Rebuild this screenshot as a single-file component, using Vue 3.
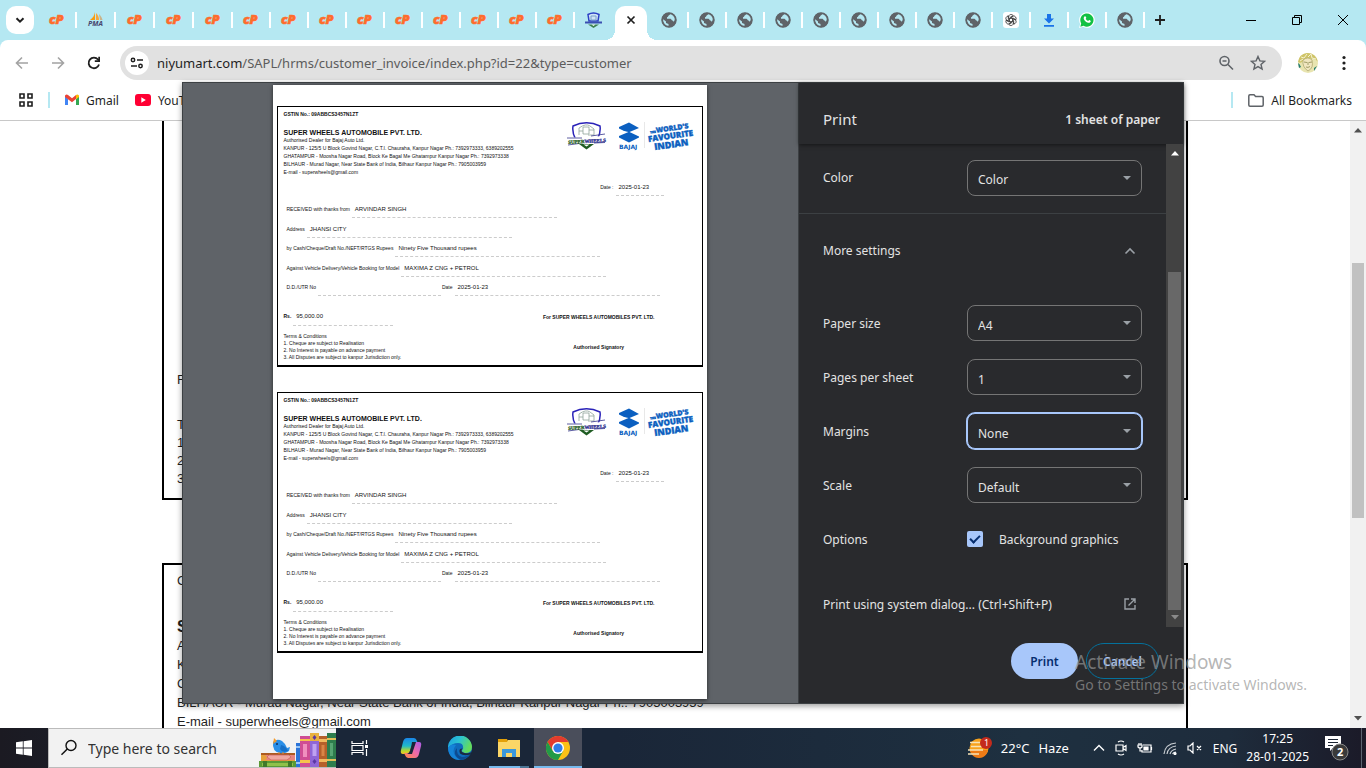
<template>
  <div class="screen">
    <header class="tab-strip">
      <button class="tab-search" aria-label="Search tabs">
        <svg width="12" height="12" viewBox="0 0 12 12"><path d="M2.5 4.2 6 7.6l3.5-3.4" fill="none" stroke="#1f1f1f" stroke-width="2" /></svg>
      </button>
      <div class="tabs">
        <div
          v-for="(tab, i) in tabs"
          :key="i"
          class="tab"
          :class="{ active: tab === 'active', plain: tabs[i + 1] === 'active' }"
        >
          <svg v-if="tab === 'cp'" width="18" height="20" viewBox="0 0 18 20">
            <text x="1" y="14" class="cp-mark">cP</text>
          </svg>
          <svg v-else-if="tab === 'pma'" width="18" height="20" viewBox="-1 -1 18 20">
            <path d="M7 1v8H2c3-2 4.500-5 5-8z" fill="#f89c0e" />
            <path d="M8 2c2 2 3 4 3 7H8z" fill="#f9a63a" />
            <path d="M11 3c2 2 3 4 3.500 6H12z" fill="#c9b38a" />
            <text x="0" y="15" class="pma-mark">PMA</text>
          </svg>
          <svg v-else-if="tab === 'wheels'" width="17" height="17" viewBox="0 0 17 17">
            <path d="M3 2.500Q8.500-.5 14 2.500L13 9H4z" fill="#cfe3f7" stroke="#2b3fc4" stroke-width="1.500" />
            <path d="M6 4h5v4H6z" fill="none" stroke="#7aa0c8" />
            <path d="M0 10.500h17" stroke="#3b4fb0" stroke-width="2" />
            <path d="M3 12.500h11L8.500 16z" fill="#3e8050" />
            <path d="M6.500 12.500h4l-2 1.500z" fill="#fff" />
          </svg>
          <button v-else-if="tab === 'active'" class="tab-close" aria-label="Close tab">
            <svg width="10" height="10" viewBox="0 0 10 10"><path d="m1.500 1.500 7 7m0-7-7 7" stroke="#1f1f1f" stroke-width="1.700" /></svg>
          </button>
          <svg v-else-if="tab === 'globe'" width="16" height="16" viewBox="0 0 16 16">
            <circle cx="8" cy="8" r="7.300" fill="#5f6368" />
            <path d="M1.800 7 5 9.500V11l2.500 1v2.500C4.500 14.500 1.500 11.500 1.800 7zM9 1.800c.2 1.200-1 1.300-1.500 2s-.5 1.500-1.500 1.500v1.400h3.500c1.200.3.8 1.600 2 1.800l1.300 1.200c1.500-2 1.800-4.500.2-6.200C12 2.300 10.500 1.700 9 1.800z" fill="#b5e8f2" />
            <circle cx="8" cy="8" r="6.800" fill="none" stroke="#5f6368" stroke-width="1.800" />
          </svg>
          <svg v-else-if="tab === 'gpt'" width="16" height="16" viewBox="0 0 16 16">
            <rect width="16" height="16" rx="3" fill="#fff" />
            <g fill="none" stroke="#333" stroke-width=".8">
              <path v-for="a in 6" :key="a" :transform="`rotate(${a * 60} 8 8)`" d="M8 6 10 7.200V10M5.800 6V3.800C6.500 2.200 9 2 10.200 3.600L7 5.500" />
            </g>
          </svg>
          <svg v-else-if="tab === 'download'" width="12" height="13" viewBox="0 0 12 13">
            <path d="M4 0h4v4.500h3L6 9.500 1 4.500h3zM1 11h10v1.800H1z" fill="#1a73e8" />
          </svg>
          <svg v-else width="16" height="16" viewBox="0 0 16 16">
            <path d="m0 16 1.200-4A7.800 7.800 0 1 1 4 14.800z" fill="#fff" />
            <path d="m1.300 14.700.9-3.300a6.600 6.600 0 1 1 2.400 2.400z" fill="#12c143" />
            <path d="M5.500 4.500c1-.8 1.400.2 1.800 1.300-.1.600-.6.700-.5 1.100.6 1 1.300 1.600 2.300 2 .5 0 .6-.8 1.100-.8 1.100.4 1.800.8 1.500 1.400-.5 1.500-2 1.600-3.300 1C6.500 9.700 5.500 8.500 4.900 7.200c-.3-1-.2-2 .6-2.700z" fill="#fff" />
          </svg>
        </div>
      </div>
      <button class="new-tab" aria-label="New tab">
        <svg width="12" height="12" viewBox="0 0 12 12"><path d="M6 1v10M1 6h10" stroke="#1f1f1f" stroke-width="1.800" /></svg>
      </button>
      <div class="window-controls">
        <button aria-label="Minimize">
          <svg width="10" height="10" viewBox="0 0 10 10"><path d="M0 5.500h10" stroke="#000" /></svg>
        </button>
        <button aria-label="Restore">
          <svg width="10" height="10" viewBox="0 0 10 10"><path d="M.5 2.500h7v7h-7zM2.500 2.500v-2h7v7h-2" fill="none" stroke="#000" /></svg>
        </button>
        <button aria-label="Close">
          <svg width="10" height="10" viewBox="0 0 10 10"><path d="m0 0 10 10M10 0 0 10" stroke="#000" /></svg>
        </button>
      </div>
    </header>

    <div class="toolbar-wrap">
      <nav class="toolbar">
        <button class="nav-btn" aria-label="Back">
          <svg width="14" height="14" viewBox="0 0 14 14"><path d="M13 7H2M7 1.500 1.500 7 7 12.500" fill="none" stroke="#a3a3a3" stroke-width="1.600" /></svg>
        </button>
        <button class="nav-btn" aria-label="Forward">
          <svg width="14" height="14" viewBox="0 0 14 14"><path d="M1 7h11M7 1.500 12.500 7 7 12.500" fill="none" stroke="#a3a3a3" stroke-width="1.600" /></svg>
        </button>
        <button class="nav-btn" aria-label="Reload">
          <svg width="14" height="14" viewBox="0 0 14 14">
            <path d="M12 8.500A5.300 5.300 0 1 1 11 3.500l1 1" fill="none" stroke="#1f1f1f" stroke-width="1.800" />
            <path d="M13 .8V6H7.800V4.300h3.500V.8z" fill="#1f1f1f" />
          </svg>
        </button>
        <div class="omnibox">
          <button class="site-info" aria-label="Site information">
            <svg width="14" height="12" viewBox="0 0 14 12"><path d="M7 3h6M1 9h6" stroke="#1f1f1f" stroke-width="1.600" /><circle cx="3" cy="3" r="1.700" fill="none" stroke="#1f1f1f" stroke-width="1.500" /><circle cx="10.500" cy="9" r="1.700" fill="none" stroke="#1f1f1f" stroke-width="1.500" /></svg>
          </button>
          <p class="url"><b>niyumart.com</b>/SAPL/hrms/customer_invoice/index.php?id=22&amp;type=customer</p>
          <button class="omni-btn" aria-label="Zoom">
            <svg width="16" height="16" viewBox="0 0 16 16"><circle cx="6.500" cy="6" r="4.500" fill="none" stroke="#5f6368" stroke-width="1.600" /><path d="M4.500 6h4M10 9.500l5 5" stroke="#5f6368" stroke-width="1.600" /></svg>
          </button>
          <button class="omni-btn" aria-label="Bookmark this tab">
            <svg width="16" height="16" viewBox="0 0 16 16"><path d="m8 1.500 1.900 4.400 4.700.4-3.600 3.100 1.100 4.700L8 11.600l-4.100 2.500L5 9.400 1.400 6.300l4.700-.4z" fill="none" stroke="#5f6368" stroke-width="1.400" /></svg>
          </button>
        </div>
        <button class="avatar" aria-label="Profile">
          <svg width="20" height="20" viewBox="0 0 20 20">
            <circle cx="10" cy="10" r="10" fill="#e8e4b0" />
            <path d="M0 9Q1 1 9 0q9 0 11 9-3-4-6-3-6-3-9 2-2 3-5 1z" fill="#cfc468" />
            <path d="m3 4 3 1 3-4M10 4l3-3 1 4 4 1M2 8l3-2" fill="none" stroke="#f4f1d2" />
            <path d="M5 7q5-4 9 0 2 8-4 11-6-4-5-11z" fill="#f0e6c0" stroke="#b0a970" stroke-width=".8" />
            <path d="m6 9 3 .500M11 9.500l3-.5M8 14q2 1 4-.5M10 9v3" stroke="#8b8a50" stroke-width=".8" fill="none" />
            <path d="M0 10q2 1 3 4l-2 1zM16 15l3-2-3 5z" fill="#257d71" />
          </svg>
        </button>
        <button class="menu-btn" aria-label="Menu">
          <svg width="4" height="16" viewBox="0 0 4 16" fill="#1f1f1f"><circle cx="2" cy="2.500" r="1.600" /><circle cx="2" cy="8" r="1.600" /><circle cx="2" cy="13.500" r="1.600" /></svg>
        </button>
      </nav>
    </div>

    <nav class="bookmarks">
      <button class="apps-btn" aria-label="Apps">
        <svg width="14" height="14" viewBox="0 0 14 14" fill="none" stroke="#1f1f1f" stroke-width="1.600"><path d="M1 1h4v4H1zM9 1h4v4H9zM1 9h4v4H1zM9 9h4v4H9z" /></svg>
      </button>
      <i class="bar-sep"></i>
      <a class="bookmark" href="#">
        <svg width="14" height="12" viewBox="0 0 14 12">
          <path d="M0 2v9h3V5z" fill="#4285f4" /><path d="M14 2v9h-3V5z" fill="#34a853" />
          <path d="M0 1.500Q1.500 0 3 1l4 3.200L11 1v4L7 8.200 0 3z" fill="#ea4335" /><path d="M11 1q1.500-1 3 .5V3l-3 2.300z" fill="#fbbc04" />
        </svg>
        Gmail
      </a>
      <a class="bookmark" href="#">
        <svg width="16" height="12" viewBox="0 0 16 12"><rect width="16" height="12" rx="3" fill="#f03" /><path d="m6.300 3.300 4.500 2.700-4.500 2.700z" fill="#fff" /></svg>
        YouTube
      </a>
      <i class="bar-sep right"></i>
      <a class="bookmark all" href="#">
        <svg width="16" height="13" viewBox="0 0 16 13"><path d="M.8 2q0-1.200 1.200-1.200h4l1.600 1.700h6.400q1.200 0 1.200 1.200V11q0 1.200-1.200 1.200H2Q.8 12.200.8 11z" fill="none" stroke="#5f6368" stroke-width="1.500" /></svg>
        All Bookmarks
      </a>
    </nav>

    <main class="viewport">
      <div class="web-page">
        <section class="invoice first">
          <p class="payee">For SUPER WHEELS AUTOMOBILES PVT. LTD.</p>
          <p>Terms &amp; Conditions</p>
          <p v-for="term in terms" :key="term">{{ term }}</p>
        </section>
        <section class="invoice second">
          <p class="gstin">GSTIN No.: 09ABBCS3457N1ZT</p>
          <h2>SUPER WHEELS AUTOMOBILE PVT. LTD.</h2>
          <p v-for="line in addressLines" :key="line" class="address">{{ line }}</p>
        </section>
      </div>
      <div class="page-scrollbar">
        <svg width="8" height="5" viewBox="0 0 8 5"><path d="M4 0 8 4.500H0z" fill="#505050" /></svg>
        <i class="page-thumb"></i>
        <svg class="arrow-down" width="8" height="5" viewBox="0 0 8 5"><path d="M0 0h8L4 4.500z" fill="#505050" /></svg>
      </div>
    </main>

    <div class="print-dialog" role="dialog" aria-label="Print">
      <div class="preview">
        <div class="sheet">
          <article v-for="n in 2" :key="n" class="receipt">
            <div class="receipt-head">
              <div>
                <p class="bold gst">GSTIN No.: 09ABBCS3457N1ZT</p>
                <h3>SUPER WHEELS AUTOMOBILE PVT. LTD.</h3>
                <p v-for="(line, i) in addressLines" :key="line" class="small" :class="{ tight: i === 0 }">{{ line }}</p>
              </div>
              <svg class="logos" width="128" height="34" viewBox="0 0 128 34">
                <path d="M6 5Q19.500-1.500 33 5q1 6-2.500 13h-22Q5 12 6 5z" fill="#fff" stroke="#2a22b8" stroke-width="1.500" />
                <path d="M12 14V7q7-5 11-2l4 3v6h-6m-5-8v7h6V6zM12 10h4m6-1h5" fill="none" stroke="#8fa39b" stroke-width=".8" />
                <path d="M12 23h15l-7.500 5.500z" fill="#1f5c22" /><path d="M16.500 23.500h6l-3 2z" fill="#fff" />
                <path d="M0 16.700 39 15v5.600L0 22.300z" fill="#fff" />
                <path d="M0 17 15 17M24 15l14-2M1 24l11-1.500M27 22l11-.5" stroke="#35358c" stroke-width=".8" />
                <text x="1" y="22" transform="rotate(-3 19 19)"><tspan class="wheel-mark green">SUPER</tspan><tspan class="wheel-mark">WHEELS</tspan></text>
                <path d="M52 6 62 1.500 72 7v2.500l-7 1.500 7 4v1.500l-10 5-10-5V14l7-3-7-3.500z" fill="#0b5fc0" />
                <path d="m52 9 9.500 2L52 15zM72 7l-9.500 4 9.500 4.500z" fill="#fff" />
                <text x="52" y="28" class="bajaj-mark">BAJAJ</text>
                <path d="M77.500 1v26" stroke="#e8e8e8" />
                <g transform="rotate(-8 102 16)" class="fav-mark">
                  <text x="84" y="10" class="tiny">THE</text>
                  <text x="90" y="10">WORLD'S</text>
                  <text x="81" y="18" class="mid">FAVOURITE</text>
                  <text x="86" y="27" class="big">INDIAN</text>
                </g>
              </svg>
            </div>
            <div class="field issue-date">
              <span class="small">Date :</span>
              <span class="blank short">2025-01-23</span>
            </div>
            <div class="fields">
              <div v-for="row in rows" :key="row[0].label" class="field">
                <template v-for="cell in row" :key="cell.label">
                  <span class="small">{{ cell.label }}</span>
                  <span class="blank" :class="cell.size">{{ cell.value }}</span>
                </template>
              </div>
            </div>
            <div class="receipt-foot">
              <div>
                <div class="field amount">
                  <span class="bold">Rs.</span>
                  <span class="blank sum">95,000.00</span>
                </div>
                <p class="small">Terms &amp; Conditions</p>
                <p v-for="term in terms" :key="term" class="small">{{ term }}</p>
              </div>
              <div class="sign">
                <p class="bold">For SUPER WHEELS AUTOMOBILES PVT. LTD.</p>
                <p class="bold">Authorised Signatory</p>
              </div>
            </div>
          </article>
        </div>
      </div>

      <aside class="sidebar">
        <div class="side-head">
          <h1>Print</h1>
          <span>1 sheet of paper</span>
        </div>
        <div class="side-body">
          <form class="settings" @submit.prevent>
            <div class="setting color-row">
              <label for="set-color">Color</label>
              <div class="select"><select id="set-color"><option>Color</option></select></div>
            </div>
            <button class="more" type="button">
              More settings
              <svg width="12" height="8" viewBox="0 0 12 8"><path d="m1.500 6.500 4.500-4.500 4.500 4.500" fill="none" stroke="#9aa0a6" stroke-width="1.600" /></svg>
            </button>
            <div v-for="s in settings" :key="s.id" class="setting">
              <label :for="s.id">{{ s.label }}</label>
              <div class="select" :class="{ focused: s.focused }">
                <select :id="s.id"><option>{{ s.value }}</option></select>
              </div>
            </div>
            <div class="setting">
              <span>Options</span>
              <label class="check"><input v-model="backgroundGraphics" type="checkbox" />Background graphics</label>
            </div>
            <button class="system" type="button">
              Print using system dialog... (Ctrl+Shift+P)
              <svg width="12" height="12" viewBox="0 0 12 12"><path d="M5 1H1v10h10V7M7 1h4v4M11 1 4.500 7.500" fill="none" stroke="#9aa0a6" stroke-width="1.400" /></svg>
            </button>
          </form>
          <div class="side-scrollbar">
            <svg width="8" height="5" viewBox="0 0 8 5"><path d="M4 0 8 4.500H0z" fill="#fff" /></svg>
            <i class="side-thumb"></i>
            <svg class="arrow-down" width="8" height="5" viewBox="0 0 8 5"><path d="M0 0h8L4 4.500z" fill="#8a8a8a" /></svg>
          </div>
        </div>
        <div class="actions">
          <button class="primary">Print</button>
          <button class="cancel">Cancel</button>
        </div>
      </aside>
    </div>

    <div class="watermark">
      <p class="wm-title">Activate Windows</p>
      <p>Go to Settings to activate Windows.</p>
    </div>

    <footer class="taskbar">
      <button class="start" aria-label="Start">
        <svg width="16" height="16" viewBox="0 0 16 16" fill="#fff"><path d="M0 2.300 6.800 1.300v6.300H0zM7.600 1.200 16 0v7.600H7.600zM0 8.400h6.800v6.300L0 13.700zM7.600 8.400H16V16l-8.400-1.200z" /></svg>
      </button>
      <label class="search">
        <svg width="18" height="18" viewBox="0 0 18 18"><circle cx="11" cy="6.500" r="5" fill="none" stroke="#111" stroke-width="1.400" /><path d="M7.300 10 1.500 15.800" stroke="#111" stroke-width="1.500" /></svg>
        <input type="text" placeholder="Type here to search" aria-label="Search" />
        <svg class="books" width="77" height="34" viewBox="0 0 77 34">
          <path d="M2 21h34v7H2z" fill="#e7a13a" /><path d="M6 22h30v5H6q4-2 0-5z" fill="#e8837f" /><path d="M2 20h34v2H2z" fill="#ad5b20" />
          <path d="M10 22h20l2 2-4 3H12l-4-3z" fill="#f0a7a0" stroke="#c95f5c" stroke-width=".7" />
          <path d="M0 28h37v6H0z" fill="#5a9a35" /><path d="M3 30h31v3H3z" fill="#8fc14a" /><path d="M4 28h4v6H4zM29 28h4v6h-4z" fill="#3f7a2a" />
          <path d="M14 9q4-4 9-1 4 3 5 7l3-1-1 4q-4 3-9 2-8-1-7-11z" fill="#2a8fe8" />
          <path d="M22 12q5 1 7 6-6 2-8-2z" fill="#1670c8" /><path d="m15 5 3 3-4 3z" fill="#f29a2c" /><circle cx="18" cy="11" r="1" fill="#0c2e60" /><path d="M20 19v2m4-2v2" stroke="#e88b2e" />
          <path d="M37 10h4v24h-4z" fill="#2c74d8" /><path d="M37 13h4v2h-4zM37 29h4v2h-4z" fill="#9ac6f5" />
          <path d="M41 3h10v31H41z" fill="#cf4d94" /><path d="M41 6h10v2H41zM41 27h10v3H41z" fill="#f6c24c" /><path d="M44 11h4v13h-4z" fill="#f08fbe" />
          <path d="M51 0h9v34h-9z" fill="#8f66d6" /><path d="M51 0h9v8h-9z" fill="#e8b13e" /><path d="m55.500 2 2 2.500-2 2.500-2-2.500zM55.500 26l2 2.500-2 2.500-2-2.500z" fill="#5a37a2" /><path d="M53.500 11h4v12h-4z" fill="#bfa2f0" />
          <path d="M60 3h8v31h-8z" fill="#b5602a" /><path d="M60 6h8v3h-8zM60 26h8v3h-8z" fill="#f0b95e" /><path d="M62.500 12h3v11h-3z" fill="#d98546" />
          <path d="M68 0h9v34h-9z" fill="#2e7d4d" /><path d="M68 5h9v2h-9zM68 26h9v2h-9z" fill="#e2bf57" /><path d="M71 10h3v13h-3z" fill="#57a573" />
        </svg>
      </label>
      <button class="app task-view" aria-label="Task view">
        <svg width="18" height="16" viewBox="0 0 18 16" fill="none" stroke="#fff" stroke-width="1.200"><path d="M1 1v2.500h11V1M1 15v-2.500h11V15M1 5.500h11v5H1zM15.500 0v4M15.500 9v7" /><path d="M14 5h3v3h-3z" fill="#fff" stroke="none" /></svg>
      </button>
      <button class="app" aria-label="Copilot">
        <svg width="24" height="22" viewBox="0 0 24 22">
          <path d="M8 1h7q2 0 3 3l1 3h-4q-2 0-3 3l-1 4q-1 3-3 3H4q-3 0-2-4L4 5q1-4 4-4z" fill="url(#cop-a)" />
          <path d="M16 21H9q-2 0-3-3l-1-2h4q2 0 3-3l1-5q1-3 3-3h4q3 0 2 4l-2 8q-1 4-4 4z" fill="url(#cop-b)" />
          <path d="M13 5h4l-4 12H8q3-1 4-6z" fill="#1a2638" />
          <defs>
            <linearGradient id="cop-a" x1="0" y1="0" x2="0" y2="1"><stop stop-color="#1a86e8" /><stop offset=".5" stop-color="#20b9c9" /><stop offset=".8" stop-color="#b8d92c" /><stop offset="1" stop-color="#f6c425" /></linearGradient>
            <linearGradient id="cop-b" x1="1" y1="0" x2="0" y2="1"><stop stop-color="#a75ce8" /><stop offset=".5" stop-color="#f06aa8" /><stop offset="1" stop-color="#ff8b3e" /></linearGradient>
          </defs>
        </svg>
      </button>
      <button class="app" aria-label="Edge">
        <svg width="24" height="24" viewBox="0 0 24 24">
          <defs>
            <linearGradient id="edge-a" x1="0" y1="0" x2="1" y2=".4"><stop stop-color="#1b9de2" /><stop offset=".5" stop-color="#2bc3d2" /><stop offset="1" stop-color="#64dc5c" /></linearGradient>
          </defs>
          <circle cx="12" cy="12" r="12" fill="#0f6cbd" />
          <path d="M0 12A12 12 0 0 1 24 11q0 6-7 6-5-1-2-4 1-6-5-6-6 0-10 5z" fill="url(#edge-a)" />
          <path d="M8 9q-5 6 0 12l4 3Q1 24 0 12q3-5 8-3z" fill="#1583d8" />
          <path d="M9 12q-1 7 5 9 5 0 8-3-3 5-9 6-7-3-6-9z" fill="#0d4b91" />
          <path d="M14.500 12.500q-3 3 2 4.500 4 1 7-1l-1 2.500q-7 2-10.500-1-2-5 2.500-5z" fill="#1a2a40" />
        </svg>
      </button>
      <button class="app running split" aria-label="File Explorer">
        <svg width="22" height="18" viewBox="0 0 22 18"><path d="M0 0h9l1 2v4H0z" fill="#e3a008" /><path d="M0 3h9l1-2h12v17H0z" fill="#fbd667" /><path d="M4 18v-8h14v8h-4v-4H8v4z" fill="#3a98dc" /></svg>
      </button>
      <button class="app running current" aria-label="Chrome">
        <svg width="24" height="24" viewBox="0 0 24 24">
          <circle cx="12" cy="12" r="12" fill="#fbc116" />
          <path d="M1.600 6A12 12 0 0 1 22.400 6H12L6.800 15z" fill="#e33b2e" />
          <path d="M1.600 6A12 12 0 0 0 12 24l5.200-9H6.800z" fill="#229a48" />
          <circle cx="12" cy="12" r="6" fill="#fff" /><circle cx="12" cy="12" r="4.600" fill="#2f7de9" />
        </svg>
      </button>
      <div class="tray">
        <button class="weather">
          <svg width="24" height="22" viewBox="0 0 24 22">
            <circle cx="11" cy="11" r="9.500" fill="#f8a21c" /><path d="M2 13h18q-2 8-9 8t-9-8z" fill="#ee7b16" />
            <path d="M2 5.500h10M3 9.500h15M0 13h15M0 17h11" stroke="#f7e3b5" stroke-width="1.600" />
            <circle cx="18" cy="6" r="6" fill="#c42b1c" /><text x="16" y="9" class="badge-num">1</text>
          </svg>
          <span>22°C</span><span>Haze</span>
        </button>
        <svg class="tray-icon" width="12" height="8" viewBox="0 0 12 8"><path d="m1 6.500 5-5 5 5" fill="none" stroke="#fff" stroke-width="1.400" /></svg>
        <svg class="tray-icon" width="12" height="16" viewBox="0 0 12 16" fill="none" stroke="#fff" stroke-width="1.200"><path d="M3 2q3-2 6 0M3 14q3 2 6 0M1 5h7v6H1zM8 7.500l3-2v5l-3-2" /></svg>
        <svg class="tray-icon" width="16" height="12" viewBox="0 0 16 12" fill="none" stroke="#fff" stroke-width="1.200"><path d="M6 3h8v7H5V8M14.500 5v3M1 3h4v2q-2 2-4 0zM2 1v2M4 1v2M3 6v3h2" /><path d="M7 5h4v3H7z" fill="#fff" /></svg>
        <svg class="tray-icon" width="14" height="14" viewBox="0 0 14 14" fill="none" stroke="#c9ced3" stroke-width="1.200"><path d="M1 13Q2 3 13 2M4 13q1-7 9-8M7 13q1-4 6-5M9.500 13q1-2 3.500-2" /><circle cx="12" cy="12.500" r="1" fill="#fff" stroke="#fff" /></svg>
        <svg class="tray-icon" width="16" height="12" viewBox="0 0 16 12" fill="none" stroke="#fff" stroke-width="1.200"><path d="M1 4h2l3-3v10L3 8H1zM10 4l4 4m0-4-4 4" /></svg>
        <span class="lang">ENG</span>
        <div class="clock"><span>17:25</span><span>28-01-2025</span></div>
        <button class="notes" aria-label="Notifications">
          <svg width="24" height="26" viewBox="0 0 24 26">
            <path d="M0 1h16v12H8l-3 3v-3H0z" fill="#fff" /><path d="M3 4.500h10M3 7.500h10M3 10.500h5" stroke="#1b2433" />
            <circle cx="15" cy="17" r="8" fill="#3a3a3a" stroke="#888" /><text x="12" y="21" class="note-num">2</text>
          </svg>
        </button>
      </div>
    </footer>
  </div>
</template>

<script setup>
import { ref } from 'vue'

const tabs = [
  'cp',
  'pma',
  ...Array(12).fill('cp'),
  'wheels',
  'active',
  ...Array(9).fill('globe'),
  'gpt',
  'download',
  'whatsapp',
  'globe',
]

const addressLines = [
  'Authorised Dealer for Bajaj Auto Ltd.',
  'KANPUR - 125/5 U Block Govind Nagar, C.T.I. Chauraha, Kanpur Nagar Ph.: 7392973333, 6389202555',
  'GHATAMPUR - Moosha Nagar Road, Block Ke Bagal Me Ghatampur Kanpur Nagar Ph.: 7392973338',
  'BILHAUR - Murad Nagar, Near State Bank of India, Bilhaur Kanpur Nagar Ph.: 7905003959',
  'E-mail - superwheels@gmail.com',
]

const terms = [
  '1. Cheque are subject to Realisation',
  '2. No Interest is payable on advance payment',
  '3. All Disputes are subject to kanpur Jurisdiction only.',
]

const rows = [
  [{ label: 'RECEIVED with thanks from', value: 'ARVINDAR SINGH' }],
  [{ label: 'Address', value: 'JHANSI CITY' }],
  [{ label: 'by Cash/Cheque/Draft No./NEFT/RTGS Rupees', value: 'Ninety Five Thousand rupees' }],
  [{ label: 'Against Vehicle Delivery/Vehicle Booking for Model', value: 'MAXIMA Z CNG + PETROL' }],
  [
    { label: 'D.D./UTR No', value: '', size: 'medium' },
    { label: 'Date', value: '2025-01-23' },
  ],
]

const settings = [
  { id: 'set-paper', label: 'Paper size', value: 'A4' },
  { id: 'set-pages', label: 'Pages per sheet', value: '1' },
  { id: 'set-margins', label: 'Margins', value: 'None', focused: true },
  { id: 'set-scale', label: 'Scale', value: 'Default' },
]

const backgroundGraphics = ref(true)
</script>

<style>
body {
  margin: 0;
  overflow: hidden;
}
</style>

<style scoped>
.screen {
  position: relative;
  display: flex;
  flex-direction: column;
  height: 100vh;
  overflow: hidden;
  background: #fff;
  color: #1f1f1f;
  font-family: "Noto Sans", "Open Sans", sans-serif;
  font-size: 12px;
}

.screen *,
.screen *::before,
.screen *::after {
  box-sizing: border-box;
}

p,
h1,
h2,
h3 {
  margin: 0;
}

button {
  display: flex;
  align-items: center;
  justify-content: center;
  padding: 0;
  border: none;
  background: none;
  font: inherit;
  color: inherit;
}

a {
  color: inherit;
  text-decoration: none;
}

svg {
  flex: none;
  display: block;
}

/* tab strip */
.tab-strip {
  display: flex;
  align-items: center;
  height: 40px;
  flex: none;
  padding-left: 6px;
  background: #b5e8f2;
}

.tab-search {
  width: 28px;
  height: 28px;
  margin-right: 3px;
  border-radius: 10px;
  background: #fff;
}

.tabs {
  display: flex;
  height: 40px;
}

.tab {
  position: relative;
  display: flex;
  align-items: center;
  justify-content: center;
  width: 38px;
}

.tab:nth-child(-n + 5) {
  width: 39px;
}

.tab::after {
  content: "";
  position: absolute;
  right: -1px;
  top: 12px;
  width: 2px;
  height: 16px;
  background: #fff;
}

.tab.plain::after {
  display: none;
}

.tab.active {
  width: 32px;
  margin: 6px 3px 0;
  padding-bottom: 6px;
  border-radius: 10px 10px 0 0;
  background: #fff;
}

.tab.active::before,
.tab.active::after {
  content: "";
  position: absolute;
  top: auto;
  bottom: 0;
  width: 10px;
  height: 10px;
  background: radial-gradient(circle at 0 0, transparent 10px, #fff 10px);
}

.tab.active::before {
  left: -10px;
}

.tab.active::after {
  right: -10px;
  background: radial-gradient(circle at 100% 0, transparent 10px, #fff 10px);
}

.cp-mark {
  font: italic 800 13px "Open Sans", sans-serif;
  fill: #ff6c2c;
  stroke: #ff6c2c;
  stroke-width: 0.6px;
}

.pma-mark {
  font: italic 700 7px "Open Sans", sans-serif;
  fill: #46466e;
}

.new-tab {
  width: 28px;
  margin-left: 2px;
}

.window-controls {
  display: flex;
  margin-left: auto;
}

.window-controls button {
  width: 46px;
  height: 40px;
}

/* toolbar */
.toolbar-wrap {
  flex: none;
  background: #b5e8f2;
}

.toolbar {
  display: flex;
  align-items: center;
  height: 46px;
  padding: 0 8px 0 4px;
  border-radius: 8px 8px 0 0;
  background: #fff;
}

.nav-btn {
  width: 36px;
  height: 28px;
}

.omnibox {
  flex: 1;
  display: flex;
  align-items: center;
  height: 34px;
  margin: 0 12px 0 8px;
  padding: 0 8px 0 5px;
  border-radius: 17px;
  background: #e1e1e1;
}

.site-info {
  width: 24px;
  height: 24px;
  border-radius: 12px;
  background: #fff;
}

.url {
  flex: 1;
  padding-left: 8px;
  font-size: 13px;
  color: #5c5c5c;
}

.url b {
  font-weight: 400;
  color: #1f1f1f;
}

.omni-btn {
  width: 32px;
  height: 28px;
}

.avatar {
  width: 28px;
  height: 28px;
}

.menu-btn {
  width: 28px;
  height: 28px;
  margin-left: 8px;
}

/* bookmarks bar */
.bookmarks {
  display: flex;
  align-items: center;
  height: 35px;
  flex: none;
  padding: 0 14px 6px 12px;
  border-bottom: 1px solid #c8c8c8;
}

.apps-btn {
  width: 28px;
  height: 28px;
}

.bar-sep {
  width: 2px;
  height: 16px;
  margin: 0 15px 0 8px;
  background: #b5e8f2;
}

.bar-sep.right {
  margin-left: auto;
}

.bookmark {
  display: flex;
  align-items: center;
  gap: 7px;
  margin-right: 16px;
}

.bookmark.all {
  margin-right: 0;
}

/* page behind the dialog */
.viewport {
  flex: 1;
  display: flex;
  min-height: 0;
  overflow: hidden;
}

.web-page {
  flex: 1;
  display: flex;
  flex-direction: column;
  align-items: center;
  gap: 63px;
  overflow: hidden;
  font: 13px/18px "Liberation Sans", Arial, sans-serif;
}

.invoice {
  flex: none;
  width: 76%;
  padding: 0 13px;
  border: 2px solid #000;
}

.invoice.first {
  display: flex;
  flex-direction: column;
  justify-content: flex-end;
  height: 379px;
  padding-bottom: 10px;
  border-top: none;
}

.payee {
  margin-bottom: 27px;
}

.invoice.second {
  padding-top: 7px;
}

.gstin {
  margin-bottom: 28px;
}

.invoice h2 {
  font-size: 16px;
  line-height: 18px;
}

.invoice .address {
  line-height: 19px;
}

.page-scrollbar {
  display: flex;
  flex-direction: column;
  align-items: center;
  width: 16px;
  padding: 7px 0;
  background: #f1f1f1;
}

.page-thumb {
  width: 12px;
  height: 43%;
  margin-top: 130px;
  background: #c1c1c1;
}

.arrow-down {
  margin-top: auto;
}

/* print dialog */
.print-dialog {
  position: absolute;
  top: 82px;
  right: 182px;
  bottom: 64px;
  left: 182px;
  display: flex;
  border: 1px solid #3c4043;
  background: #292a2d;
  box-shadow: 0 2px 6px rgba(0, 0, 0, 0.4);
}

.preview {
  flex: 1;
  display: flex;
  justify-content: center;
  padding: 2px 2px 4px 0;
  background: #5f6368;
}

.sheet {
  display: flex;
  flex-direction: column;
  gap: 25px;
  aspect-ratio: 434 / 614;
  padding: 21px 4px 0;
  background: #fff;
  box-shadow: 0 1px 4px rgba(0, 0, 0, 0.6);
  font: 6px/8px "Liberation Sans", Arial, sans-serif;
  color: #111;
}

.receipt {
  height: 261px;
  padding: 3px 5px 0 6px;
  border: 1px solid #000;
  border-bottom-width: 2px;
}

.small {
  font-size: 5px;
}

.bold {
  font-size: 5px;
  font-weight: 700;
}

.receipt-head {
  display: flex;
  justify-content: space-between;
  height: 72px;
}

.gst {
  margin-bottom: 11px;
}

.receipt h3 {
  font-size: 7px;
  line-height: 8px;
}

.small.tight {
  line-height: 7px;
}

.logos {
  margin: 11px 2px 0 0;
}

.wheel-mark {
  font: 700 5px "Liberation Serif", serif;
  fill: #2b2f8e;
  stroke: #2b2f8e;
  stroke-width: 0.3px;
}

.wheel-mark.green {
  fill: #1f5c22;
  stroke: #1f5c22;
}

.bajaj-mark {
  font: 700 6px "DejaVu Sans", sans-serif;
  fill: #0b5fc0;
}

.fav-mark {
  font: 800 7px "Open Sans", sans-serif;
  fill: #0b5fc0;
  stroke: #0b5fc0;
  stroke-width: 0.4px;
}

.fav-mark .tiny {
  font-size: 3px;
}

.fav-mark .mid {
  font-size: 8px;
}

.fav-mark .big {
  font-size: 9px;
}

.field {
  display: flex;
  height: 13px;
  white-space: nowrap;
}

.blank {
  width: 205px;
  margin: 0 1px 0 2px;
  padding-left: 3px;
  border-bottom: 1px dashed #ccc;
}

.blank.medium {
  width: 123px;
}

.blank.short {
  width: 48px;
}

.blank.sum {
  width: 100px;
}

.issue-date {
  justify-content: flex-end;
  margin: 1px 32px 9px 0;
}

.fields {
  display: flex;
  flex-direction: column;
  justify-content: space-between;
  height: 91px;
  padding: 0 3px;
}

.receipt-foot {
  display: flex;
  margin-top: 17px;
  line-height: 7px;
}

.amount {
  margin-bottom: 7px;
}

.sign {
  display: flex;
  flex-direction: column;
  gap: 23px;
  margin: 1px 42px 0 auto;
  text-align: center;
}

/* settings column */
.sidebar {
  display: flex;
  flex-direction: column;
  width: 385px;
  border-left: 1px solid #3c4043;
  color: #e3e3e3;
}

.side-head {
  display: flex;
  align-items: center;
  justify-content: space-between;
  height: 61px;
  padding: 11px 23px 0 24px;
  box-shadow: 0 1px 4px rgba(0, 0, 0, 0.5);
}

.side-head h1 {
  font-size: 15px;
  font-weight: 400;
}

.side-head span {
  font-weight: 600;
}

.side-body {
  flex: 1;
  display: flex;
  min-height: 0;
}

.settings {
  flex: 1;
}

.setting {
  display: flex;
  align-items: center;
  justify-content: space-between;
  height: 54px;
  padding: 0 24px;
}

.color-row {
  height: 69px;
  padding-bottom: 2px;
}

.select {
  position: relative;
  width: 175px;
}

.select::after {
  content: "";
  position: absolute;
  top: 16px;
  right: 11px;
  border: 4px solid transparent;
  border-top-color: #9aa0a6;
  border-bottom: none;
}

.select select {
  display: block;
  width: 100%;
  height: 36px;
  padding: 4px 24px 0 10px;
  border: 1px solid #757575;
  border-radius: 8px;
  outline: none;
  appearance: none;
  background: #292a2d;
  font: inherit;
  color: #e3e3e3;
}

.select.focused select {
  border-color: #a8c7fa;
  box-shadow: 0 0 0 1px #a8c7fa;
}

.more {
  justify-content: space-between;
  width: 100%;
  height: 74px;
  margin-bottom: 9px;
  padding: 0 30px 0 24px;
  border-top: 1px solid #3c4043;
}

.check {
  display: flex;
  align-items: center;
  gap: 16px;
  width: 175px;
}

.check input {
  width: 16px;
  height: 16px;
  margin: 0;
  border-radius: 2px;
  appearance: none;
  background: #a8c7fa;
}

.check input:checked::after {
  content: "";
  display: block;
  width: 6px;
  height: 10px;
  margin: 2px 0 0 5px;
  border: solid #062e6f;
  border-width: 0 2px 2px 0;
  transform: rotate(45deg);
}

.system {
  justify-content: space-between;
  width: 100%;
  height: 76px;
  padding: 0 30px 0 24px;
}

.side-scrollbar {
  display: flex;
  flex-direction: column;
  align-items: center;
  width: 17px;
  padding: 7px 0;
  background: #424242;
}

.side-thumb {
  width: 13px;
  height: 72%;
  margin-top: 116px;
  background: #686868;
}

.actions {
  display: flex;
  align-items: center;
  justify-content: flex-end;
  gap: 8px;
  height: 76px;
  padding: 0 24px 8px 0;
}

.actions button {
  height: 36px;
  border-radius: 18px;
  font-weight: 600;
}

.actions .primary {
  width: 67px;
  background: #a8c7fa;
  color: #062e6f;
}

.actions .cancel {
  width: 73px;
  border: 1px solid #04719c;
  color: #a8c7fa;
}

.watermark {
  position: absolute;
  right: 59px;
  bottom: 73px;
  font-size: 14px;
  line-height: 20px;
  color: rgba(150, 150, 150, 0.7);
}

.wm-title {
  font-size: 19px;
  line-height: 26px;
}

/* taskbar */
.taskbar {
  display: flex;
  height: 40px;
  flex: none;
  background: linear-gradient(90deg, #1b1a22, #1a2638 25%, #1a2638 45%, #1e3040 75%, #1e2c3c 90%, #1b1a28);
  color: #fff;
}

.start {
  width: 48px;
}

.search {
  display: flex;
  align-items: center;
  width: 288px;
  padding-left: 11px;
  border: 1px solid #bbb;
  border-width: 1px 0 1px 1px;
  background: #f2f2f2;
}

.search input {
  flex: 1;
  min-width: 0;
  padding: 0 0 0 10px;
  border: none;
  outline: none;
  background: none;
  font: 14px "Noto Sans", "Open Sans", sans-serif;
}

.search input::placeholder {
  color: #333;
  opacity: 1;
}

.books {
  align-self: flex-end;
}

.app {
  position: relative;
  width: 48px;
  margin-right: 1px;
}

.app.task-view {
  margin-right: 3px;
}

.app.running::after {
  content: "";
  position: absolute;
  right: 0;
  bottom: 0;
  left: 0;
  height: 2px;
  background: #76b9ed;
}

.app.split::after {
  right: 4px;
  left: 4px;
  background: linear-gradient(90deg, #76b9ed 31px, #4b7595 31px);
}

.app.current {
  background: #4a4e5b;
}

.tray {
  display: flex;
  align-items: center;
  margin-left: auto;
  font-size: 12px;
}

.weather {
  gap: 9px;
  margin-right: 19px;
  font-size: 13px;
}

.tray-icon {
  margin: 0 5px;
}

.lang {
  margin: 0 9px 0 5px;
}

.clock {
  display: flex;
  flex-direction: column;
  align-items: center;
  line-height: 18px;
}

.notes {
  width: 50px;
  height: 40px;
  margin: 0 4px 0 3px;
  border-right: 1px solid #5b6470;
}

.badge-num {
  font: 9px "Noto Sans", sans-serif;
  fill: #fff;
}

.note-num {
  font: 700 11px "Noto Sans", sans-serif;
  fill: #fff;
}
</style>
